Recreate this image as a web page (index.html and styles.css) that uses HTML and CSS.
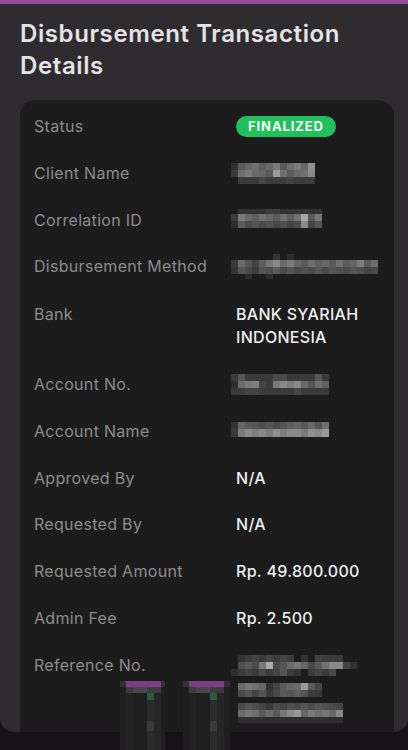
FILE: index.html
```html
<!DOCTYPE html>
<html>
<head>
<meta charset="utf-8">
<link rel="stylesheet" href="styles.css">
</head>
<body>
<div class="topbar"></div>
<div class="panel">
  <h1 class="title">Disbursement Transaction Details</h1>
  <div class="card">
    <div class="label">Status</div>
    <div class="value"><span class="badge">FINALIZED</span></div>

    <div class="label">Client Name</div>
    <div class="value">
      <svg class="mosaic m-client" width="84" height="21" viewBox="0 0 84 21">
        <rect x="0" y="0" width="7" height="7" fill="#2e2e2e"/><rect x="7" y="0" width="7" height="7" fill="#5a5a5a"/><rect x="14" y="0" width="7" height="7" fill="#666"/><rect x="21" y="0" width="7" height="7" fill="#707070"/><rect x="28" y="0" width="7" height="7" fill="#5e5e5e"/><rect x="35" y="0" width="7" height="7" fill="#6a6a6a"/><rect x="42" y="0" width="7" height="7" fill="#7a7a7a"/><rect x="49" y="0" width="7" height="7" fill="#5a5a5a"/><rect x="56" y="0" width="7" height="7" fill="#6e6e6e"/><rect x="63" y="0" width="7" height="7" fill="#7c7c7c"/><rect x="70" y="0" width="7" height="7" fill="#666"/><rect x="77" y="0" width="7" height="7" fill="#909090"/>
        <rect x="0" y="7" width="7" height="7" fill="#3a3a3a"/><rect x="7" y="7" width="7" height="7" fill="#6e6e6e"/><rect x="14" y="7" width="7" height="7" fill="#7a7a7a"/><rect x="21" y="7" width="7" height="7" fill="#6a6a6a"/><rect x="28" y="7" width="7" height="7" fill="#666"/><rect x="35" y="7" width="7" height="7" fill="#5a5a5a"/><rect x="42" y="7" width="7" height="7" fill="#9a9a9a"/><rect x="49" y="7" width="7" height="7" fill="#707070"/><rect x="56" y="7" width="7" height="7" fill="#5e5e5e"/><rect x="63" y="7" width="7" height="7" fill="#6a6a6a"/><rect x="70" y="7" width="7" height="7" fill="#707070"/><rect x="77" y="7" width="7" height="7" fill="#8a8a8a"/>
        <rect x="7" y="14" width="77" height="7" fill="#3c3c3c"/><rect x="28" y="14" width="7" height="7" fill="#474747"/><rect x="56" y="14" width="7" height="7" fill="#444"/>
      </svg>
    </div>

    <div class="label">Correlation ID</div>
    <div class="value">
      <svg class="mosaic m-corr" width="91" height="19" viewBox="0 0 91 19">
        <rect x="7" y="0" width="84" height="5" fill="#333"/><rect x="35" y="0" width="14" height="5" fill="#3c3c3c"/>
        <rect x="0" y="5" width="7" height="7" fill="#3a3a3a"/><rect x="7" y="5" width="7" height="7" fill="#7a7a7a"/><rect x="14" y="5" width="7" height="7" fill="#6a6a6a"/><rect x="21" y="5" width="7" height="7" fill="#5e5e5e"/><rect x="28" y="5" width="7" height="7" fill="#707070"/><rect x="35" y="5" width="7" height="7" fill="#666"/><rect x="42" y="5" width="7" height="7" fill="#5a5a5a"/><rect x="49" y="5" width="7" height="7" fill="#6e6e6e"/><rect x="56" y="5" width="7" height="7" fill="#5e5e5e"/><rect x="63" y="5" width="7" height="7" fill="#707070"/><rect x="70" y="5" width="7" height="7" fill="#a8a8a8"/><rect x="77" y="5" width="7" height="7" fill="#5a5a5a"/><rect x="84" y="5" width="7" height="7" fill="#777"/>
        <rect x="0" y="12" width="7" height="7" fill="#2c2c2c"/><rect x="7" y="12" width="7" height="7" fill="#5a5a5a"/><rect x="14" y="12" width="7" height="7" fill="#4a4a4a"/><rect x="21" y="12" width="7" height="7" fill="#555"/><rect x="28" y="12" width="7" height="7" fill="#4a4a4a"/><rect x="35" y="12" width="7" height="7" fill="#505050"/><rect x="42" y="12" width="7" height="7" fill="#474747"/><rect x="49" y="12" width="7" height="7" fill="#4e4e4e"/><rect x="56" y="12" width="7" height="7" fill="#444"/><rect x="63" y="12" width="7" height="7" fill="#4a4a4a"/><rect x="70" y="12" width="7" height="7" fill="#8a8a8a"/><rect x="77" y="12" width="7" height="7" fill="#444"/><rect x="84" y="12" width="7" height="7" fill="#555"/>
      </svg>
    </div>

    <div class="label">Disbursement Method</div>
    <div class="value">
      <svg class="mosaic m-disb" width="147" height="25" viewBox="0 0 147 25">
        <rect x="42" y="0" width="7" height="6" fill="#333"/><rect x="56" y="0" width="7" height="6" fill="#2e2e2e"/>
        <rect x="0" y="6" width="7" height="7" fill="#3a3a3a"/><rect x="7" y="6" width="7" height="7" fill="#6a6a6a"/><rect x="14" y="6" width="7" height="7" fill="#555"/><rect x="21" y="6" width="7" height="7" fill="#444"/><rect x="28" y="6" width="7" height="7" fill="#5e5e5e"/><rect x="35" y="6" width="7" height="7" fill="#777"/><rect x="42" y="6" width="7" height="7" fill="#8a8a8a"/><rect x="49" y="6" width="7" height="7" fill="#6a6a6a"/><rect x="56" y="6" width="7" height="7" fill="#7a7a7a"/><rect x="63" y="6" width="7" height="7" fill="#666"/><rect x="70" y="6" width="7" height="7" fill="#5a5a5a"/><rect x="77" y="6" width="7" height="7" fill="#6e6e6e"/><rect x="84" y="6" width="7" height="7" fill="#5e5e5e"/><rect x="91" y="6" width="7" height="7" fill="#666"/><rect x="98" y="6" width="7" height="7" fill="#5a5a5a"/><rect x="105" y="6" width="7" height="7" fill="#707070"/><rect x="112" y="6" width="7" height="7" fill="#5e5e5e"/><rect x="119" y="6" width="7" height="7" fill="#666"/><rect x="126" y="6" width="7" height="7" fill="#7a7a7a"/><rect x="133" y="6" width="7" height="7" fill="#5a5a5a"/><rect x="140" y="6" width="7" height="7" fill="#6e6e6e"/>
        <rect x="0" y="13" width="7" height="7" fill="#333"/><rect x="7" y="13" width="7" height="7" fill="#555"/><rect x="14" y="13" width="7" height="7" fill="#4a4a4a"/><rect x="21" y="13" width="7" height="7" fill="#3c3c3c"/><rect x="28" y="13" width="7" height="7" fill="#555"/><rect x="35" y="13" width="7" height="7" fill="#4e4e4e"/><rect x="42" y="13" width="7" height="7" fill="#5a5a5a"/><rect x="49" y="13" width="7" height="7" fill="#4a4a4a"/><rect x="56" y="13" width="7" height="7" fill="#555"/><rect x="63" y="13" width="7" height="7" fill="#4a4a4a"/><rect x="70" y="13" width="7" height="7" fill="#505050"/><rect x="77" y="13" width="7" height="7" fill="#4a4a4a"/><rect x="84" y="13" width="7" height="7" fill="#555"/><rect x="91" y="13" width="7" height="7" fill="#4a4a4a"/><rect x="98" y="13" width="7" height="7" fill="#555"/><rect x="105" y="13" width="7" height="7" fill="#505050"/><rect x="112" y="13" width="7" height="7" fill="#4a4a4a"/><rect x="119" y="13" width="7" height="7" fill="#555"/><rect x="126" y="13" width="7" height="7" fill="#4e4e4e"/><rect x="133" y="13" width="7" height="7" fill="#444"/><rect x="140" y="13" width="7" height="7" fill="#4a4a4a"/>
        <rect x="14" y="20" width="7" height="5" fill="#2e2e2e"/><rect x="35" y="20" width="7" height="5" fill="#2e2e2e"/>
      </svg>
    </div>

    <div class="label">Bank</div>
    <div class="value">BANK SYARIAH INDONESIA</div>

    <div class="label">Account No.</div>
    <div class="value">
      <svg class="mosaic m-acc" width="98" height="21" viewBox="0 0 98 21">
        <rect x="0" y="0" width="98" height="7" fill="#3a3a3a"/><rect x="7" y="0" width="7" height="7" fill="#555"/><rect x="42" y="0" width="14" height="7" fill="#4a4a4a"/><rect x="84" y="0" width="7" height="7" fill="#555"/>
        <rect x="0" y="7" width="7" height="7" fill="#2e2e2e"/><rect x="7" y="7" width="7" height="7" fill="#6a6a6a"/><rect x="14" y="7" width="7" height="7" fill="#7a7a7a"/><rect x="21" y="7" width="7" height="7" fill="#7e7e7e"/><rect x="28" y="7" width="7" height="7" fill="#444"/><rect x="35" y="7" width="7" height="7" fill="#3a3a3a"/><rect x="42" y="7" width="7" height="7" fill="#7a7a7a"/><rect x="49" y="7" width="7" height="7" fill="#888"/><rect x="56" y="7" width="7" height="7" fill="#7e7e7e"/><rect x="63" y="7" width="7" height="7" fill="#8a8a8a"/><rect x="70" y="7" width="7" height="7" fill="#6a6a6a"/><rect x="77" y="7" width="7" height="7" fill="#555"/><rect x="84" y="7" width="7" height="7" fill="#707070"/><rect x="91" y="7" width="7" height="7" fill="#5e5e5e"/>
        <rect x="0" y="14" width="98" height="7" fill="#3a3a3a"/><rect x="14" y="14" width="14" height="7" fill="#444"/><rect x="63" y="14" width="7" height="7" fill="#474747"/>
      </svg>
    </div>

    <div class="label">Account Name</div>
    <div class="value">
      <svg class="mosaic m-name" width="98" height="15" viewBox="0 0 98 15">
        <rect x="0" y="0" width="7" height="7" fill="#333"/><rect x="7" y="0" width="7" height="7" fill="#666"/><rect x="14" y="0" width="7" height="7" fill="#5a5a5a"/><rect x="21" y="0" width="7" height="7" fill="#555"/><rect x="28" y="0" width="7" height="7" fill="#4e4e4e"/><rect x="35" y="0" width="7" height="7" fill="#555"/><rect x="42" y="0" width="7" height="7" fill="#4a4a4a"/><rect x="49" y="0" width="7" height="7" fill="#555"/><rect x="56" y="0" width="7" height="7" fill="#5e5e5e"/><rect x="63" y="0" width="7" height="7" fill="#666"/><rect x="70" y="0" width="7" height="7" fill="#5a5a5a"/><rect x="77" y="0" width="7" height="7" fill="#6a6a6a"/><rect x="84" y="0" width="7" height="7" fill="#555"/><rect x="91" y="0" width="7" height="7" fill="#707070"/>
        <rect x="0" y="7" width="7" height="8" fill="#3a3a3a"/><rect x="7" y="7" width="7" height="8" fill="#7a7a7a"/><rect x="14" y="7" width="7" height="8" fill="#8a8a8a"/><rect x="21" y="7" width="7" height="8" fill="#7e7e7e"/><rect x="28" y="7" width="7" height="8" fill="#888"/><rect x="35" y="7" width="7" height="8" fill="#7a7a7a"/><rect x="42" y="7" width="7" height="8" fill="#8e8e8e"/><rect x="49" y="7" width="7" height="8" fill="#7e7e7e"/><rect x="56" y="7" width="7" height="8" fill="#888"/><rect x="63" y="7" width="7" height="8" fill="#8a8a8a"/><rect x="70" y="7" width="7" height="8" fill="#7a7a7a"/><rect x="77" y="7" width="7" height="8" fill="#909090"/><rect x="84" y="7" width="7" height="8" fill="#8a8a8a"/><rect x="91" y="7" width="7" height="8" fill="#9a9a9a"/>
      </svg>
    </div>

    <div class="label">Approved By</div>
    <div class="value">N/A</div>

    <div class="label">Requested By</div>
    <div class="value">N/A</div>

    <div class="label">Requested Amount</div>
    <div class="value">Rp. 49.800.000</div>

    <div class="label">Admin Fee</div>
    <div class="value">Rp. 2.500</div>

    <div class="label">Reference No.</div>
    <div class="value">
      <svg class="mosaic m-ref" width="133" height="68" viewBox="0 0 133 68">
        <rect x="7" y="0" width="7" height="7" fill="#333"/><rect x="14" y="0" width="7" height="7" fill="#3c3c3c"/><rect x="21" y="0" width="7" height="7" fill="#444"/><rect x="28" y="0" width="7" height="7" fill="#3a3a3a"/><rect x="35" y="0" width="7" height="7" fill="#444"/><rect x="42" y="0" width="7" height="7" fill="#3a3a3a"/><rect x="49" y="0" width="7" height="7" fill="#444"/><rect x="56" y="0" width="7" height="7" fill="#3c3c3c"/><rect x="70" y="0" width="7" height="7" fill="#333"/><rect x="84" y="0" width="7" height="7" fill="#444"/><rect x="91" y="0" width="7" height="7" fill="#3c3c3c"/><rect x="98" y="0" width="14" height="7" fill="#3a3a3a"/>
        <rect x="7" y="7" width="7" height="7" fill="#4e4e4e"/><rect x="14" y="7" width="7" height="7" fill="#5a5a5a"/><rect x="21" y="7" width="7" height="7" fill="#4a4a4a"/><rect x="28" y="7" width="7" height="7" fill="#777"/><rect x="35" y="7" width="7" height="7" fill="#aaa"/><rect x="42" y="7" width="7" height="7" fill="#4a4a4a"/><rect x="49" y="7" width="7" height="7" fill="#555"/><rect x="56" y="7" width="7" height="7" fill="#6a6a6a"/><rect x="63" y="7" width="7" height="7" fill="#777"/><rect x="70" y="7" width="7" height="7" fill="#666"/><rect x="77" y="7" width="7" height="7" fill="#4a4a4a"/><rect x="84" y="7" width="7" height="7" fill="#5a5a5a"/><rect x="91" y="7" width="7" height="7" fill="#707070"/><rect x="98" y="7" width="7" height="7" fill="#888"/><rect x="105" y="7" width="7" height="7" fill="#8a8a8a"/><rect x="112" y="7" width="7" height="7" fill="#444"/><rect x="119" y="7" width="7" height="7" fill="#333"/>
        <rect x="0" y="14" width="7" height="7" fill="#2e2e2e"/><rect x="7" y="14" width="7" height="7" fill="#3c3c3c"/><rect x="14" y="14" width="7" height="7" fill="#444"/><rect x="21" y="14" width="7" height="7" fill="#3a3a3a"/><rect x="28" y="14" width="7" height="7" fill="#4a4a4a"/><rect x="35" y="14" width="7" height="7" fill="#3c3c3c"/><rect x="42" y="14" width="7" height="7" fill="#444"/><rect x="49" y="14" width="7" height="7" fill="#555"/><rect x="56" y="14" width="7" height="7" fill="#3c3c3c"/><rect x="63" y="14" width="7" height="7" fill="#333"/><rect x="77" y="14" width="7" height="7" fill="#3a3a3a"/><rect x="84" y="14" width="7" height="7" fill="#444"/><rect x="91" y="14" width="7" height="7" fill="#3a3a3a"/><rect x="98" y="14" width="7" height="7" fill="#4a4a4a"/>
        <rect x="7" y="28" width="7" height="7" fill="#6a6a6a"/><rect x="14" y="28" width="7" height="7" fill="#777"/><rect x="21" y="28" width="7" height="7" fill="#6e6e6e"/><rect x="28" y="28" width="7" height="7" fill="#666"/><rect x="35" y="28" width="7" height="7" fill="#333"/><rect x="42" y="28" width="7" height="7" fill="#444"/><rect x="49" y="28" width="7" height="7" fill="#5a5a5a"/><rect x="56" y="28" width="7" height="7" fill="#666"/><rect x="63" y="28" width="7" height="7" fill="#6a6a6a"/><rect x="70" y="28" width="7" height="7" fill="#999"/><rect x="77" y="28" width="7" height="7" fill="#5a5a5a"/><rect x="84" y="28" width="7" height="7" fill="#444"/>
        <rect x="7" y="35" width="7" height="7" fill="#4a4a4a"/><rect x="14" y="35" width="7" height="7" fill="#555"/><rect x="21" y="35" width="7" height="7" fill="#444"/><rect x="28" y="35" width="7" height="7" fill="#555"/><rect x="35" y="35" width="7" height="7" fill="#3a3a3a"/><rect x="42" y="35" width="7" height="7" fill="#4a4a4a"/><rect x="49" y="35" width="7" height="7" fill="#5a5a5a"/><rect x="56" y="35" width="7" height="7" fill="#555"/><rect x="63" y="35" width="7" height="7" fill="#5e5e5e"/><rect x="70" y="35" width="7" height="7" fill="#555"/><rect x="77" y="35" width="7" height="7" fill="#3c3c3c"/><rect x="84" y="35" width="7" height="7" fill="#3a3a3a"/>
        <rect x="7" y="48" width="7" height="7" fill="#4a4a4a"/><rect x="14" y="48" width="7" height="7" fill="#555"/><rect x="21" y="48" width="7" height="7" fill="#4e4e4e"/><rect x="28" y="48" width="7" height="7" fill="#444"/><rect x="35" y="48" width="7" height="7" fill="#3a3a3a"/><rect x="42" y="48" width="7" height="7" fill="#4a4a4a"/><rect x="49" y="48" width="7" height="7" fill="#444"/><rect x="56" y="48" width="7" height="7" fill="#4e4e4e"/><rect x="63" y="48" width="7" height="7" fill="#4a4a4a"/><rect x="70" y="48" width="7" height="7" fill="#555"/><rect x="77" y="48" width="7" height="7" fill="#4a4a4a"/><rect x="84" y="48" width="7" height="7" fill="#555"/><rect x="91" y="48" width="7" height="7" fill="#4e4e4e"/><rect x="98" y="48" width="7" height="7" fill="#4a4a4a"/><rect x="105" y="48" width="7" height="7" fill="#444"/>
        <rect x="7" y="55" width="7" height="7" fill="#6a6a6a"/><rect x="14" y="55" width="7" height="7" fill="#777"/><rect x="21" y="55" width="7" height="7" fill="#6e6e6e"/><rect x="28" y="55" width="7" height="7" fill="#5a5a5a"/><rect x="35" y="55" width="7" height="7" fill="#6a6a6a"/><rect x="42" y="55" width="7" height="7" fill="#5a5a5a"/><rect x="49" y="55" width="7" height="7" fill="#777"/><rect x="56" y="55" width="7" height="7" fill="#8a8a8a"/><rect x="63" y="55" width="7" height="7" fill="#999"/><rect x="70" y="55" width="7" height="7" fill="#666"/><rect x="77" y="55" width="7" height="7" fill="#7a7a7a"/><rect x="84" y="55" width="7" height="7" fill="#6e6e6e"/><rect x="91" y="55" width="7" height="7" fill="#777"/><rect x="98" y="55" width="7" height="7" fill="#6a6a6a"/><rect x="105" y="55" width="7" height="7" fill="#888"/>
        <rect x="7" y="62" width="105" height="6" fill="#2e2e2e"/>
      </svg>
    </div>
  </div>
</div>
<svg class="floater" width="110" height="69" viewBox="0 0 110 69">
  <rect x="0" y="0" width="6" height="6" fill="#3a2a3c"/><rect x="6" y="0" width="35" height="6" fill="#7c3e84"/><rect x="41" y="0" width="4" height="6" fill="#3a2a3c"/>
  <rect x="0" y="6" width="45" height="63" fill="#1f1f1f"/>
  <rect x="6" y="6" width="35" height="6" fill="#3e3a40"/><rect x="13" y="6" width="14" height="6" fill="#4a4650"/>
  <rect x="27" y="12" width="7" height="7" fill="#2c5a3e"/>
  <rect x="6" y="12" width="7" height="57" fill="#242424"/><rect x="34" y="12" width="7" height="57" fill="#262626"/><rect x="27" y="19" width="7" height="50" fill="#2c2c2c"/><rect x="27" y="40" width="7" height="10" fill="#3a3a3a"/>
  <rect x="63" y="0" width="6" height="6" fill="#3a2a3c"/><rect x="69" y="0" width="35" height="6" fill="#7c3e84"/><rect x="104" y="0" width="6" height="6" fill="#3a2a3c"/>
  <rect x="63" y="6" width="47" height="63" fill="#1f1f1f"/>
  <rect x="69" y="6" width="35" height="6" fill="#3e3a40"/><rect x="76" y="6" width="14" height="6" fill="#4a4650"/>
  <rect x="90" y="12" width="7" height="7" fill="#2c5a3e"/>
  <rect x="69" y="12" width="7" height="57" fill="#242424"/><rect x="97" y="12" width="7" height="57" fill="#262626"/><rect x="90" y="19" width="7" height="50" fill="#2c2c2c"/><rect x="90" y="40" width="7" height="10" fill="#3a3a3a"/>
</svg>
</body>
</html>
```

FILE: styles.css
```css
html, body {
  margin: 0;
  padding: 0;
}
body {
  background: #161217;
  font-family: Inter, "Noto Sans", sans-serif;
  width: 408px;
  height: 750px;
  overflow: hidden;
  position: relative;
}
.topbar {
  height: 4px;
  background: #9b4aa0;
}
.panel {
  height: 728px;
  box-sizing: border-box;
  background: #2e2c2f;
  border-radius: 0 0 14px 14px;
  overflow: hidden;
  padding: 14px 14px 0 20px;
}
.title {
  margin: 0;
  font-size: 24px;
  line-height: 32px;
  font-weight: 600;
  color: #e4e4e4;
  letter-spacing: 0.6px;
  max-width: 350px;
}
.card {
  margin-top: 18px;
  width: 374px;
  box-sizing: border-box;
  background: #1c1c1c;
  border-radius: 16px;
  padding: 15px 14px 40px 14px;
  display: grid;
  grid-template-columns: 202px 1fr;
  row-gap: 23.8px;
  font-size: 16px;
  line-height: 23px;
}
.label {
  color: #8c8c8c;
  letter-spacing: 0.3px;
}
.value {
  color: #efefef;
  font-weight: 500;
  letter-spacing: 0.3px;
}
.badge {
  display: inline-block;
  background: #22c05c;
  color: #f4fff7;
  font-size: 13px;
  font-weight: 700;
  line-height: 21px;
  letter-spacing: 0.9px;
  padding: 0 12px;
  border-radius: 11px;
  vertical-align: top;
  margin-top: 1px;
}
.mosaic {
  display: block;
  margin-left: -5px;
}
.m-client { margin-top: 1px; }
.m-corr { margin-top: 0; }
.m-disb { margin-top: -1px; }
.m-acc { margin-top: 1px; }
.m-name { margin-top: 2px; }
.m-ref { margin-top: 1px; }
.floater {
  position: absolute;
  left: 120px;
  top: 681px;
}
```
